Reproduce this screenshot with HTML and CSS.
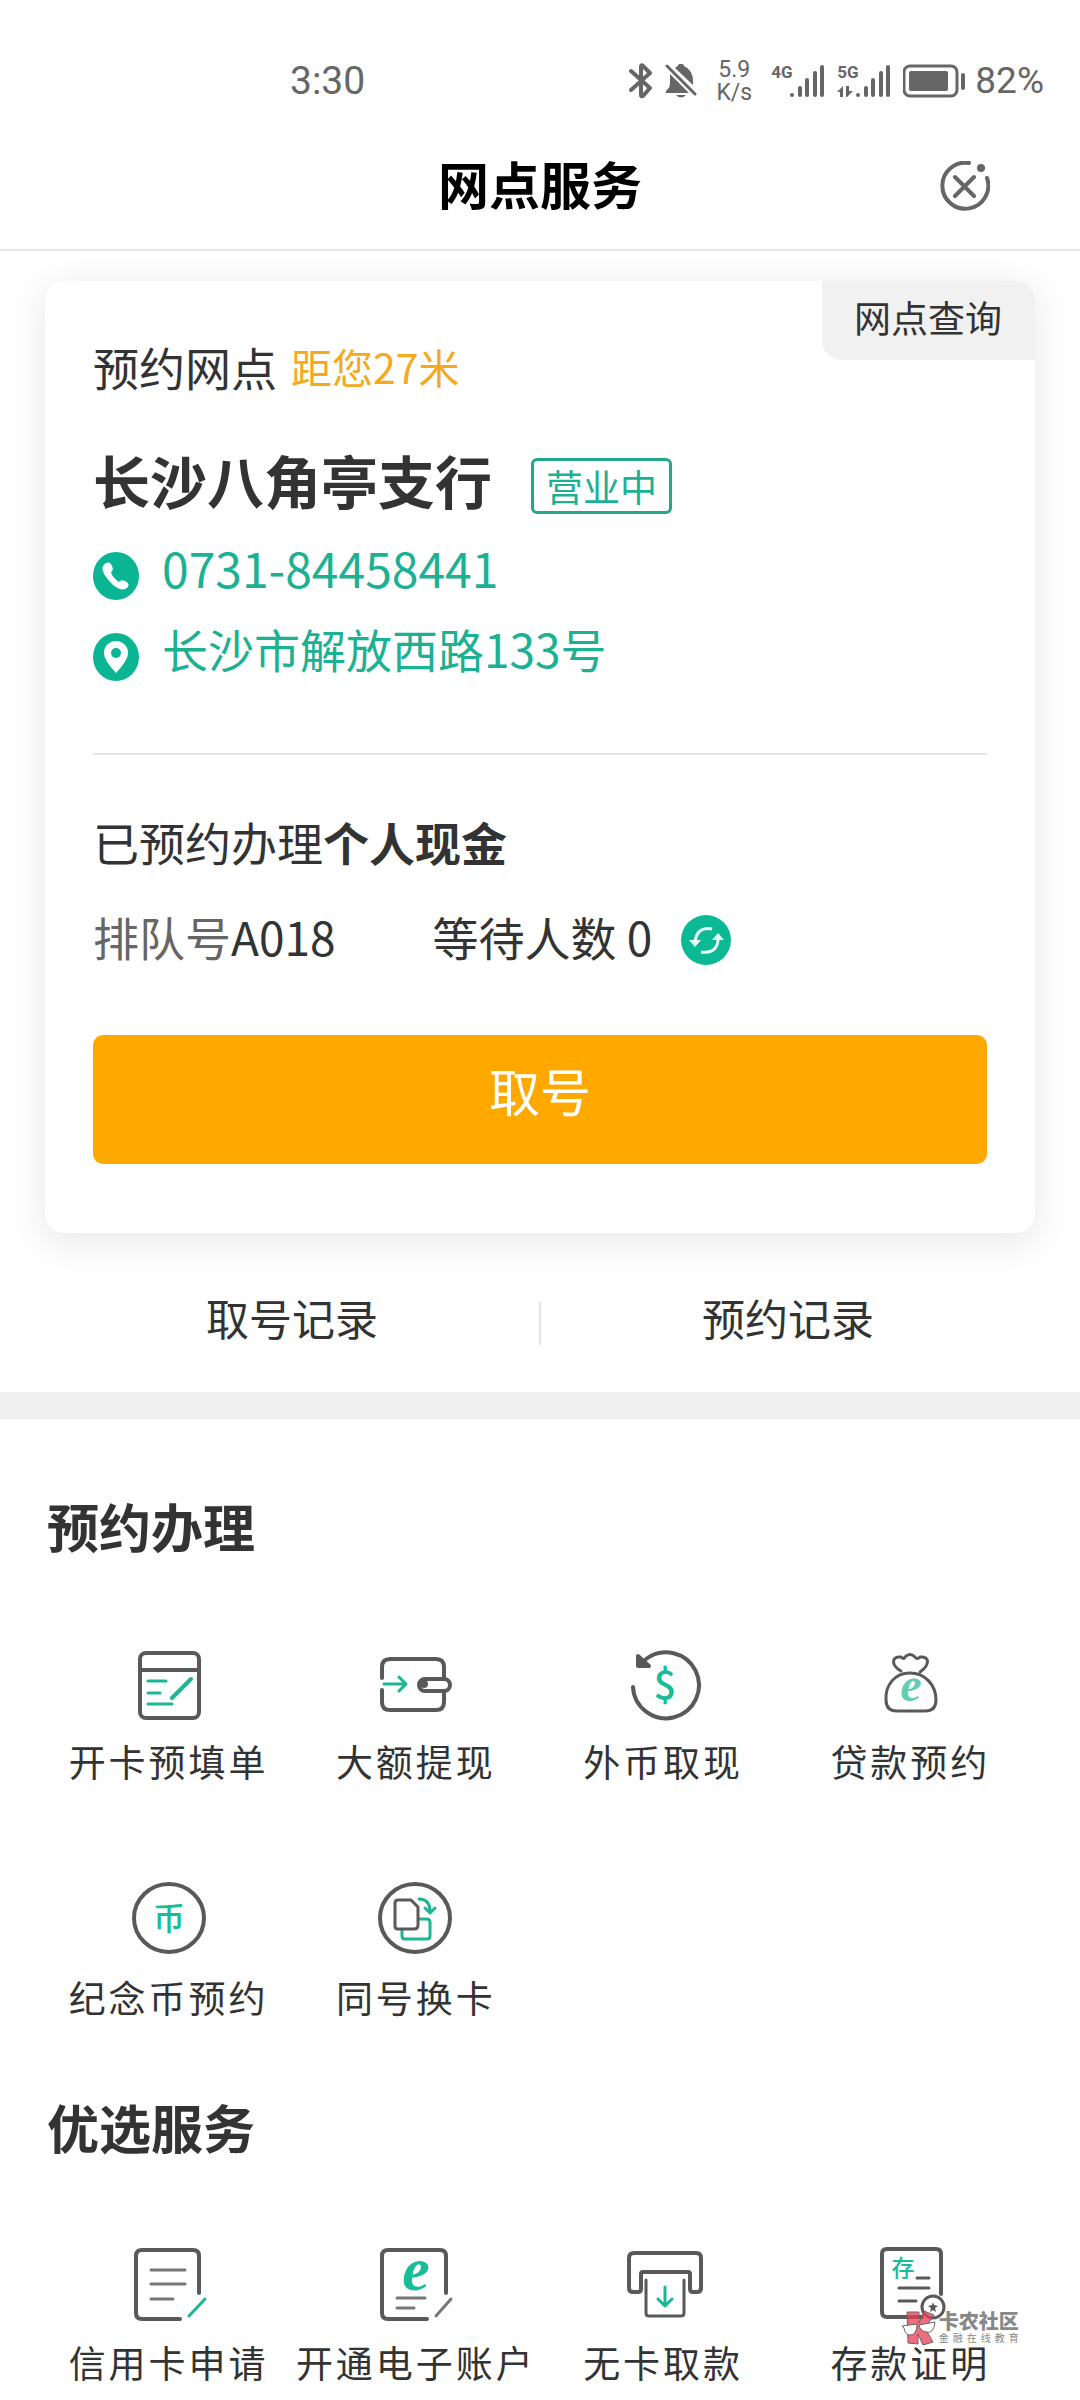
FILE: index.html
```html
<!DOCTYPE html>
<html lang="zh-CN">
<head>
<meta charset="utf-8">
<meta name="viewport" content="width=device-width">
<title>网点服务</title>
<link rel="stylesheet" href="styles.css">
</head>
<body>
<div class="status">
  <span class="clock">3:30</span>
  <div class="status-icons">
    <svg width="24" height="38" viewBox="0 0 24 38" class="line"><path d="M2 9 21 26 14 34Q12 35 12 33V5Q12 2 14 4L21 11 2 28" stroke-width="4"/></svg>
    <svg class="bell" width="32" height="36" viewBox="0 0 32 36"><path d="M5 11 24 30H1Q0 28 3 26 5 24 5 20ZM10 5Q13 3 14 1H18L19 3Q29 7 28 22ZM11 32H21Q16 37 11 32Z" fill="#666"/><path d="M2 3 30 31" class="line" stroke-width="3"/></svg>
    <div class="speed"><span>5.9</span><span>K/s</span></div>
    <div class="signal"><span class="net">4G</span><svg width="54" height="36" viewBox="0 0 54 36"><path d="M21 32v0M29 25v7M36 17v15M44 10v22M51 4v28" class="line" stroke-width="4"/></svg></div>
    <div class="signal second"><span class="net">5G</span><svg width="54" height="36" viewBox="0 0 54 36"><path d="M21 32v0M29 25v7M36 17v15M44 10v22M51 4v28" class="line" stroke-width="4"/><path d="M0 29 6 23V34H3V29ZM9 23H12V28H16L10 34H9Z" fill="#666"/></svg></div>
    <svg class="battery" width="64" height="36" viewBox="0 0 64 36"><rect x="1" y="3" width="53" height="30" rx="6" class="line" stroke-width="3"/><rect x="6" y="8" width="39" height="20" rx="2" fill="#666"/><rect x="58" y="10" width="4" height="17" rx="2" fill="#666"/></svg>
    <span>82%</span>
  </div>
</div>
<header class="header">
  <h1>网点服务</h1>
  <button class="close" aria-label="关闭"><svg width="50" height="50" viewBox="0 0 50 50" class="line"><path d="M29 2A23 23 0 1 0 47 17M15 16 34 35M34 16 15 35" stroke-width="4"/><circle cx="41" cy="7" r="4" fill="#666" stroke="none"/></svg></button>
</header>
<main>
<section class="card">
  <a class="lookup" href="#">网点查询</a>
  <p class="row branch"><span>预约网点</span><span class="distance">距您27米</span></p>
  <div class="name"><h2>长沙八角亭支行</h2><span class="tag">营业中</span></div>
  <a class="contact phone" href="tel:073184458441"><svg width="46" height="48" viewBox="0 0 46 48"><ellipse cx="23" cy="24" rx="23" ry="24" fill="#09b592"/><path d="M13 11Q17 9 19 14 21 18 18 20 19 25 26 30 28 27 32 29 38 32 34 36 29 40 20 33 7 20 10 14 11 12 13 11Z" fill="#fff"/></svg><span>0731-84458441</span></a>
  <a class="contact" href="#"><svg width="46" height="48" viewBox="0 0 46 48"><ellipse cx="23" cy="24" rx="23" ry="24" fill="#09b592"/><path d="M23 8A12 12 0 0 1 35 21Q35 27 23 40 11 27 11 21A12 12 0 0 1 23 8Z" fill="#fff"/><circle cx="23" cy="20" r="5" fill="#09b592"/></svg><span>长沙市解放西路133号</span></a>
  <hr>
  <p class="row">已预约办理<b>个人现金</b></p>
  <div class="row queue"><span><span class="muted">排队号</span>A018</span><span class="waiting">等待人数 0</span>
    <button class="refresh" aria-label="刷新"><svg width="51" height="51" viewBox="0 0 51 51"><circle cx="25" cy="25" r="25" fill="#0bba94"/><path d="M31 14Q16 11 14 27M20 37Q36 39 37 25" fill="none" stroke="#e9fff8" stroke-width="3"/><path d="M8 25H20L14 32ZM31 25H43L37 18Z" fill="#e9fff8"/></svg></button></div>
  <button class="take">取号</button>
</section>
<nav class="records"><a href="#">取号记录</a><a href="#">预约记录</a></nav>
<section class="services first">
  <h2>预约办理</h2>
  <div class="grid">
    <a class="item" href="#"><svg class="icon" viewBox="0 0 80 80"><rect x="11" y="10" width="59" height="65" rx="6"/><path d="M11 27H70"/><path class="g thin" d="M19 38H37M19 50H31M19 61H43"/><path class="g" d="M62 36 43 55"/></svg><span>开卡预填单</span></a>
    <a class="item" href="#"><svg class="icon" viewBox="0 0 80 80"><path d="M6 35V24Q6 16 14 16H60Q68 16 68 24V34M68 49V59Q68 67 60 67H14Q6 67 6 59V47"/><rect x="43" y="36" width="31" height="12" rx="6"/><circle cx="48" cy="41" r="2" class="solid"/><path class="g thin" d="M8 41H29M23 34 30 41 23 48"/></svg><span>大额提现</span></a>
    <a class="item" href="#"><svg class="icon" viewBox="0 0 80 80"><path d="M10 44A33 33 0 1 0 23 16"/><path class="solid" d="M15 13 26 23H15Z"/><text x="42" y="56" font-size="40">$</text></svg><span>外币取现</span></a>
    <a class="item" href="#"><svg class="icon" viewBox="0 0 80 80"><path class="thin" d="M31 28C21 22 21 13 31 14Q34 17 35 14 40 9 45 14 47 17 50 14C60 13 60 22 50 29"/><path class="thin" d="M40 30C25 30 15 42 16 57Q16 68 27 68H55Q66 68 66 57C66 42 55 30 40 30Z"/><text x="41" y="58" font-size="48" class="e soft">e</text></svg><span>贷款预约</span></a>
    <a class="item" href="#"><svg class="icon" viewBox="0 0 80 80"><ellipse cx="40" cy="39" rx="35" ry="34"/><text x="40" y="51" font-size="32">币</text></svg><span>纪念币预约</span></a>
    <a class="item" href="#"><svg class="icon" viewBox="0 0 80 80"><ellipse cx="39" cy="39" rx="35" ry="34"/><path class="g thin" d="M43 40H51Q54 40 54 43V57Q54 60 51 60H29Q26 60 26 57V51M43 20Q54 20 54 33M49 29 54 34 59 29"/><path class="thin" d="M22 21H35L42 28V46Q42 50 38 50H22Q19 50 19 47V24Q19 21 22 21Z"/></svg><span>同号换卡</span></a>
  </div>
</section>
<section class="services">
  <h2>优选服务</h2>
  <div class="grid">
    <a class="item" href="#"><svg class="icon" viewBox="0 0 80 80"><path d="M70 49V12Q70 6 64 6H13Q7 6 7 12V69Q7 75 13 75H51"/><path class="thin pale" d="M22 26H56M22 40H56M22 55H44"/><path class="g thin" d="M76 55 60 72"/></svg><span>信用卡申请</span></a>
    <a class="item" href="#"><svg class="icon" viewBox="0 0 80 80"><path d="M70 49V12Q70 6 64 6H12Q6 6 6 12V69Q6 75 12 75H51"/><text x="40" y="46" font-size="62" class="e">e</text><path class="thin pale" d="M21 54H49M21 64H38M75 55 60 72"/></svg><span>开通电子账户</span></a>
    <a class="item" href="#"><svg class="icon" viewBox="0 0 80 80"><path d="M11 9H73Q78 9 78 14V44Q78 48 74 48H70Q67 48 67 45V30Q67 28 65 28H20Q18 28 18 30V45Q18 48 15 48H10Q6 48 6 44V14Q6 9 11 9Z"/><path class="thin" d="M23 36V69Q23 72 26 72H58Q61 72 61 69V36"/><path class="g thin" d="M42 43V61M35 55 42 62 49 55"/></svg><span>无卡取款</span></a>
    <a class="item last" href="#"><svg class="icon" viewBox="0 0 80 80"><path d="M71 50V10Q71 5 66 5H17Q12 5 12 10V68Q12 73 17 73H52"/><text x="33" y="32" font-size="23">存</text><path class="thin" d="M47 34H59M29 44H59M29 57H46"/><circle class="thin" cx="63" cy="63" r="11"/><path class="solid dot" d="M63 58 64 61 68 62 65 64 66 68 63 66 60 68 61 64 58 62 62 61Z"/></svg><span>存款证明</span>
    <div class="mark"><svg width="36" height="38" viewBox="0 0 36 38"><g stroke="#6c6262" stroke-width="1"><path d="M6 2H18V13L23 1 33 5 24 18 32 32 22 35 17 24V34L7 33Z" fill="#e83e56" fill-opacity=".75"/><path d="M1 16 16 14Q16 26 8 25 4 24 3 18ZM18 15 34 12Q33 24 25 22 19 21 18 15Z" fill="#fff"/></g></svg><div><b>卡农社区</b><small>金融在线教育</small></div></div></a>
  </div>
</section>
</main>
</body>
</html>
```
FILE: styles.css
```css
* { box-sizing: border-box; }
body { margin: 0; min-height: 100vh; background: #fefefe; color: #333; font-family: "Noto Sans CJK SC", sans-serif; font-size: 46px; line-height: 60px; }
h1, h2, p { margin: 0; }
a { color: inherit; text-decoration: none; }
button { border: 0; padding: 0; background: none; font: inherit; color: inherit; }
svg { display: block; flex: none; }
.line { fill: none; stroke: #666; stroke-linecap: round; stroke-linejoin: round; }

.status { display: flex; align-items: center; justify-content: space-between; height: 122px; padding: 40px 36px 0 290px; color: #666; font-family: Roboto, sans-serif; font-size: 37px; }
.clock { font-size: 39px; }
.status-icons { display: flex; align-items: center; }
.bell { margin-left: 12px; }
.speed { display: flex; flex-direction: column; margin: 0 18px; width: 38px; font-size: 23px; line-height: 23px; text-align: center; }
.signal { position: relative; }
.signal.second { margin-left: 12px; }
.net { position: absolute; left: 0; top: 0; font-size: 17px; line-height: 18px; font-weight: 700; }
.battery { margin: 0 8px 0 12px; }

.header { display: grid; grid-template-columns: 1fr auto 1fr; align-items: center; height: 129px; padding: 0 90px; border-bottom: 2px solid #e4e4e4; color: #000; }
.header h1 { grid-column: 2; padding-bottom: 6px; font-size: 51px; font-weight: 700; }
.close { justify-self: end; }

.card { position: relative; margin: 30px 45px 0; padding: 55px 48px 69px; border-radius: 20px; background: #fff; box-shadow: 0 8px 36px rgba(0, 0, 0, .09); }
.lookup { position: absolute; top: 0; right: 0; padding: 6px 33px 13px 32px; border-radius: 0 20px 0 20px; background: #f1f1f1; font-size: 37px; }
.branch { display: flex; gap: 14px; }
.distance { color: #f5a91c; font-size: 41px; }
.name { display: flex; align-items: center; gap: 37px; margin-top: 43px; line-height: 80px; }
.name h2 { font-size: 57px; }
.tag { margin: 14px 0 0 2px; padding: 0 12px; border: 3px solid #22a88a; border-radius: 6px; color: #1cb193; font-size: 37px; line-height: 50px; }
.contact { display: flex; gap: 23px; line-height: 81px; color: #1cb193; }
.phone { font-size: 48px; }
.name + .contact { margin-top: 8px; }
.contact svg { margin-top: 25px; }
hr { height: 2px; margin: 64px 0 56px; border: 0; background: #e4e4e4; }
.queue { display: flex; align-items: center; margin-top: 34px; }
.muted { color: #666; }
.waiting { margin-left: 97px; }
.refresh { margin-left: 29px; padding-top: 10px; }
.take { display: block; width: 100%; margin-top: 69px; height: 129px; padding-bottom: 20px; border-radius: 10px; background: #ffa900; color: #fff; font-size: 51px; }

.records { display: flex; padding: 69px 45px 47px; border-bottom: 27px solid #f0f0f0; font-size: 43px; text-align: center; }
.records a { flex: 1; height: 43px; line-height: 30px; }
.records a + a { border-left: 2px solid #e4e4e4; }

.services { padding: 80px 46px 18px 45px; }
.services.first { padding: 77px 46px 0 45px; }
.services h2 { padding-left: 2px; font-size: 52px; }
.grid { display: grid; grid-template-columns: repeat(4, 1fr); row-gap: 98px; margin-top: 87px; }
.item { display: flex; flex-direction: column; align-items: center; gap: 18px; font-size: 37px; line-height: 40px; letter-spacing: 3px; white-space: nowrap; }
.last { position: relative; }
.icon { width: 80px; height: 80px; fill: none; stroke: #595959; stroke-width: 4; stroke-linecap: round; stroke-linejoin: round; overflow: visible; }
.icon .thin { stroke-width: 3; }
.icon .pale { stroke: #777; }
.icon .g { stroke: #1bb694; }
.icon .solid { fill: #555; }
.icon .dot { stroke: none; }
.icon text { fill: #18bd98; stroke: none; letter-spacing: 0; text-anchor: middle; font-weight: 500; }
.icon .e { font-family: "Liberation Serif", serif; font-weight: 700; font-style: italic; }
.icon .soft { fill: #62cdb2; }
.mark { position: absolute; left: 114px; top: 66px; display: flex; gap: 2px; color: #888; }
.mark b { display: block; font-size: 20px; font-weight: 900; line-height: 22px; letter-spacing: 0; }
.mark small { display: block; font-size: 10px; line-height: 12px; letter-spacing: 4px; }
```
